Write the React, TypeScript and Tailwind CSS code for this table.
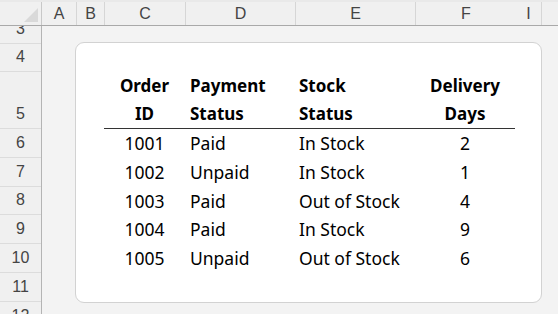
import React from 'react'

interface Col {
  label: string
  width: string
  line?: boolean
}

const cols: Col[] = [
  { label: 'A', width: 'w-[35px]', line: true },
  { label: 'B', width: 'w-[28px]', line: true },
  { label: 'C', width: 'w-[81px]', line: true },
  { label: 'D', width: 'w-[110px]', line: true },
  { label: 'E', width: 'w-[120px]', line: true },
  { label: 'F', width: 'w-[100px]' },
  { label: 'I', width: 'w-[26px]', line: true },
  { label: 'J', width: 'w-[40px]' },
]

const rowHeads = [
  { n: '4', h: 'h-[28px]' },
  { n: '5', h: 'h-[57px]' },
  { n: '6', h: 'h-[29px]' },
  { n: '7', h: 'h-[29px]' },
  { n: '8', h: 'h-[28px]' },
  { n: '9', h: 'h-[29px]' },
  { n: '10', h: 'h-[29px]' },
  { n: '11', h: 'h-[29px]' },
]

const orders = [
  { id: '1001', pay: 'Paid', stock: 'In Stock', days: 2, h: 'h-[29px]' },
  { id: '1002', pay: 'Unpaid', stock: 'In Stock', days: 1, h: 'h-[29px]' },
  { id: '1003', pay: 'Paid', stock: 'Out of Stock', days: 4, h: 'h-[28px]' },
  { id: '1004', pay: 'Paid', stock: 'In Stock', days: 9, h: 'h-[29px]' },
  { id: '1005', pay: 'Unpaid', stock: 'Out of Stock', days: 6, h: 'h-[29px]' },
]

const headFont = { fontFamily: '"Liberation Sans", Arial, sans-serif' }

function App() {
  return (
    <div className="w-[558px] h-[314px] overflow-hidden bg-[#f3f3f3] flex flex-col" style={{ fontFamily: '"Noto Sans", "Open Sans", sans-serif' }}>
      {/* window edge */}
      <div className="h-[2px] bg-[#e9e9e9] shrink-0" />

      {/* column letters */}
      <div className="flex h-[24px] shrink-0 bg-[#f0f0f0] border-b border-[#a9a9a9] text-[16px] text-[#444]" style={headFont}>
        <div className="w-[42px] shrink-0 border-r border-[#c8c8c8] flex items-end justify-end pr-[3px] pb-[3px]">
          <svg width="14" height="14" viewBox="0 0 14 14">
            <polygon points="14,0 14,14 0,14" fill="#d9d9d9" />
          </svg>
        </div>
        {cols.map((c) => (
          <div
            key={c.label}
            className={`${c.width} shrink-0 flex items-center justify-center ${c.line ? 'border-r border-[#d6d6d6]' : ''}`}
          >
            {c.label}
          </div>
        ))}
      </div>

      <div className="flex flex-1 min-h-0">
        {/* row numbers */}
        <div className="w-[42px] shrink-0 bg-[#f0f0f0] border-r border-[#b4b4b4] flex flex-col text-[16px] text-[#444]" style={headFont}>
          <div className="h-[18px] shrink-0 overflow-hidden flex items-end border-b border-[#dcdcdc]">
            <div className="h-[28px] w-full shrink-0 leading-[28px] text-center">3</div>
          </div>
          {rowHeads.map((r) => (
            <div key={r.n} className={`${r.h} shrink-0 flex items-end justify-center border-b border-[#dcdcdc]`}>
              <div className="leading-[28px]">{r.n}</div>
            </div>
          ))}
          <div className="h-[28px] shrink-0 leading-[28px] text-center">12</div>
        </div>

        {/* sheet area */}
        <div className="flex-1 pl-[33px] pt-[16px]">
          <div className="w-[467px] h-[261px] bg-white border border-[#d2d2d2] rounded-[9px] pl-[28px] pt-[29px] text-[17.5px] text-black">
            <div className="w-[411px]">
              <div className="h-[57px] flex items-end border-b border-[#333] font-bold text-[17px] leading-[28px]">
                <div className="w-[81px] text-center">Order<br />ID</div>
                <div className="w-[110px] pl-[5px]">Payment<br />Status</div>
                <div className="w-[120px] pl-[4px]">Stock<br />Status</div>
                <div className="w-[100px] text-center">Delivery<br />Days</div>
              </div>
              {orders.map((o) => (
                <div key={o.id} className={`${o.h} flex items-center`}>
                  <div className="w-[81px] text-center">{o.id}</div>
                  <div className="w-[110px] pl-[5px]">{o.pay}</div>
                  <div className="w-[120px] pl-[4px]">{o.stock}</div>
                  <div className="w-[100px] text-center">{o.days}</div>
                </div>
              ))}
            </div>
          </div>
        </div>
      </div>
    </div>
  )
}

export default App
